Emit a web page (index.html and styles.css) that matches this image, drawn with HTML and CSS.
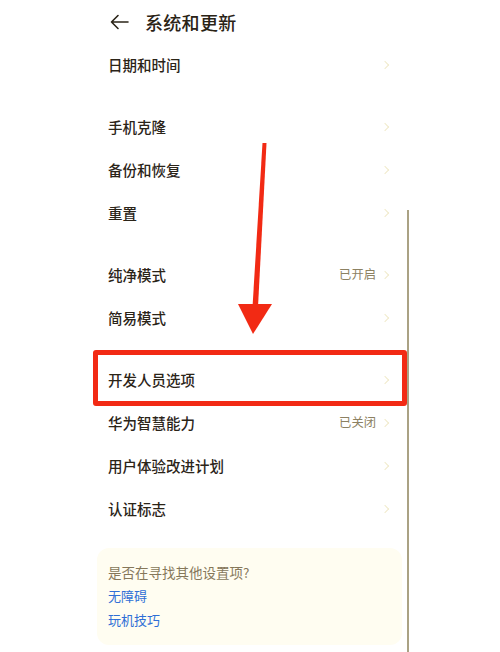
FILE: index.html
```html
<!DOCTYPE html>
<html lang="zh">
<head>
<meta charset="utf-8">
<link rel="stylesheet" href="styles.css">
</head>
<body>
<div class="page">
  <div class="screen">
    <header class="topbar">
      <svg class="back" width="20" height="16" viewBox="0 0 20 16"><path d="M9 1.5 L2.5 8 L9 14.5 M2.5 8 H19" fill="none" stroke="#2b2418" stroke-width="1.6" stroke-linecap="round" stroke-linejoin="round"/></svg>
      <span class="title">系统和更新</span>
    </header>

    <div class="group">
      <div class="row"><span class="label">日期和时间</span><span class="chev"></span></div>
    </div>
    <div class="group">
      <div class="row"><span class="label">手机克隆</span><span class="chev"></span></div>
      <div class="row"><span class="label">备份和恢复</span><span class="chev"></span></div>
      <div class="row"><span class="label">重置</span><span class="chev"></span></div>
    </div>
    <div class="group">
      <div class="row"><span class="label">纯净模式</span><span class="value">已开启</span><span class="chev"></span></div>
      <div class="row"><span class="label">简易模式</span><span class="chev"></span></div>
    </div>
    <div class="group">
      <div class="row"><span class="label">开发人员选项</span><span class="chev"></span></div>
      <div class="row"><span class="label">华为智慧能力</span><span class="value">已关闭</span><span class="chev"></span></div>
      <div class="row"><span class="label">用户体验改进计划</span><span class="chev"></span></div>
      <div class="row"><span class="label">认证标志</span><span class="chev"></span></div>
    </div>

    <div class="card">
      <div class="card-q">是否在寻找其他设置项?</div>
      <div class="card-link">无障碍</div>
      <div class="card-link">玩机技巧</div>
    </div>
  </div>

  <div class="edge"></div>
  <div class="highlight"></div>
  <svg class="arrow" width="40" height="210" viewBox="0 0 40 210">
    <path d="M25.5 13 L29.5 13 L21 177 L15.5 177 Z" fill="#f22a14"/>
    <path d="M1 174 L35 174 L16 204 Z" fill="#f22a14"/>
  </svg>
</div>
</body>
</html>
```
FILE: styles.css
```css
html, body {
  margin: 0;
  padding: 0;
  background: #ffffff;
}
body {
  font-family: "Noto Sans CJK SC", "Noto Sans", sans-serif;
  color: #2b2418;
}
.page {
  position: relative;
  width: 500px;
  height: 652px;
  overflow: hidden;
}
.screen {
  margin-left: 95px;
  width: 313px;
  display: flex;
  flex-direction: column;
}
.topbar {
  height: 44px;
  display: flex;
  align-items: center;
  padding-bottom: 1px;
  box-sizing: border-box;
}
.back {
  margin-left: 14px;
  margin-right: 16px;
}
.title {
  font-size: 18px;
  font-weight: 500;
  letter-spacing: 0.3px;
  color: #2a2316;
}
.group {
  display: flex;
  flex-direction: column;
}
.group + .group {
  margin-top: 19px;
}
.row {
  height: 43px;
  box-sizing: border-box;
  display: flex;
  align-items: center;
  padding-left: 13px;
  padding-right: 18px;
  padding-bottom: 3px;
}
.label {
  font-size: 14.5px;
  font-weight: 500;
  color: #2b2418;
  flex: 1;
}
.value {
  font-size: 12.3px;
  color: #8c8162;
  margin-right: 6px;
}
.chev {
  width: 5px;
  height: 5px;
  border-top: 1.3px solid #f0eacb;
  border-right: 1.3px solid #f0eacb;
  transform: rotate(45deg);
  margin-right: 2px;
  margin-top: 2px;
}
.card {
  margin-top: 17px;
  margin-left: 2px;
  width: 305px;
  height: 97px;
  box-sizing: border-box;
  padding: 12px 11px 12px;
  background: #fffdf1;
  border-radius: 12px;
}
.card-q {
  font-size: 13.5px;
  line-height: 24px;
  color: #85775a;
}
.card-link {
  font-size: 13px;
  line-height: 24px;
  color: #2f6fd6;
}
.edge {
  position: absolute;
  left: 407px;
  top: 210px;
  width: 2px;
  height: 442px;
  background: #aaa284;
}
.highlight {
  position: absolute;
  left: 93px;
  top: 350px;
  width: 314px;
  height: 56px;
  box-sizing: border-box;
  border: 5px solid #f22a14;
  border-radius: 3px;
}
.arrow {
  position: absolute;
  left: 237px;
  top: 130px;
}
```
